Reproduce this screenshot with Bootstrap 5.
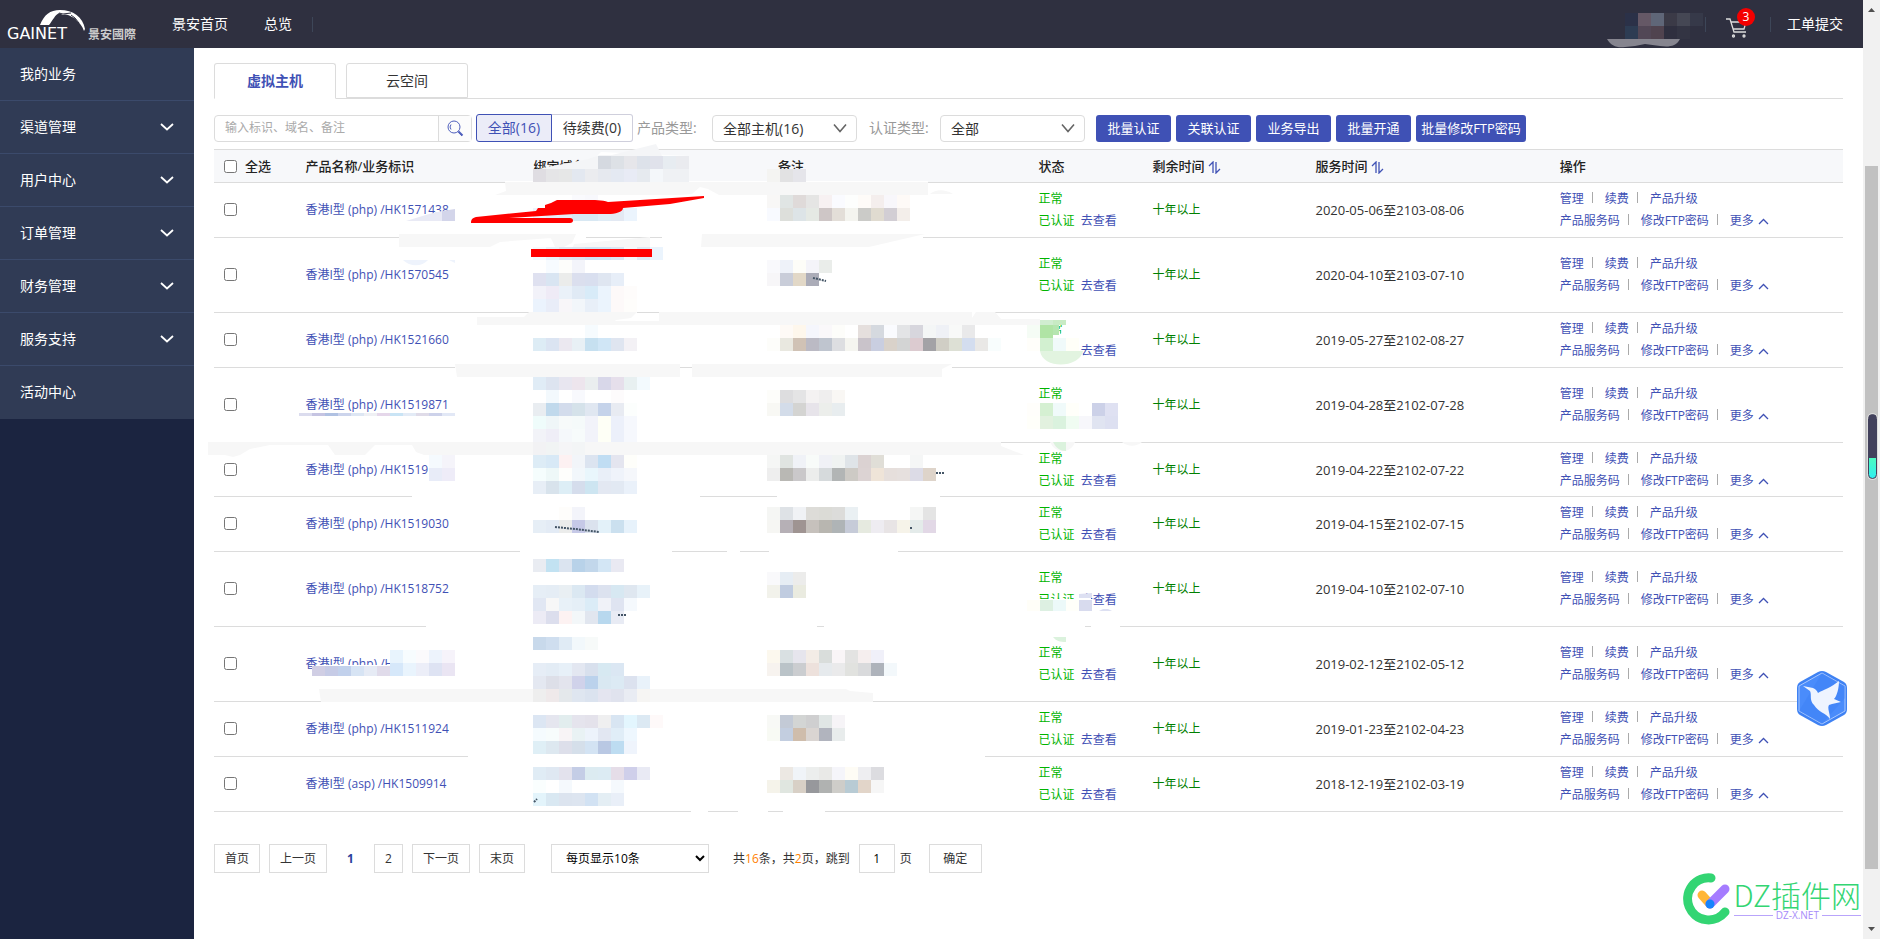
<!DOCTYPE html>
<html lang="zh-CN">
<head>
<meta charset="utf-8">
<meta name="viewport" content="width=device-width, initial-scale=1">
<title>虚拟主机</title>
<link rel="stylesheet" href="https://cdn.jsdelivr.net/npm/bootstrap@5.3.0/dist/css/bootstrap.min.css">
<style>
:root { --brand: #3f51b5; --line: #dcdcdc; }
body { font: 12px/22px "Open Sans", "Noto Sans CJK SC", sans-serif; color: #333; background: #fff; }
a { color: var(--brand); text-decoration: none; }
button, input, select { font-family: inherit; }
.topbar { height: 48px; background: #2f3040; font-size: 14px; }
.topbar a { color: #fff; }
.logo { width: 172px; height: 48px; }
.vsep { width: 1px; height: 15px; background: #3d4658; }
.cart { width: 28px; height: 30px; }
.cart-count { top: -1px; right: -1px; width: 18px; height: 18px; border-radius: 50%; background: #f40000; color: #fff; font-size: 12px; line-height: 18px; text-align: center; }
.side { width: 194px; background: #1b2440; }
.side a { height: 53px; padding: 0 20px; background: #303b55; border-bottom: 1px solid #3b4a6b; color: #fff; font-size: 14px; }
.side li:last-child a { border-color: #303b55; }
.pane { padding: 15px 20px 64px; }
.tabs { border-bottom: 1px solid var(--line); gap: 10px; }
.tabs .nav-link { width: 122px; height: 35px; margin-bottom: -1px; padding: 0; border: 1px solid var(--line); border-radius: 3px 3px 0 0; color: #333; font-size: 14px; }
.tabs .nav-link.active { height: 36px; border-bottom-color: #fff; color: var(--brand); font-weight: 700; background: #fff; }
.filters { margin: 15px 0 7px; font-size: 14px; }
.filters .find { width: 258px; height: 27px; margin-right: 4px; border: 1px solid var(--line); border-radius: 4px; }
.find input { border: 0; padding: 0 10px; font-size: 12px; min-width: 0; outline: 0; background: none; }
.find input::placeholder { color: #aaa; }
.find button { width: 33px; border: 0; border-left: 1px solid var(--line); background: #fcfcfc; padding: 0; }
.seg { height: 28px; padding: 0 10px; border: 1px solid #cfcfdc; background: #fff; color: #333; border-radius: 0 3px 3px 0; }
.seg.on { border-color: var(--brand); background: #ebecf8; color: var(--brand); border-radius: 3px 0 0 3px; }
.seg + .seg { border-left: 0; width: 81px; padding: 0; }
.seg.on { width: 76px; padding: 0; }
.filters label { color: #999; margin: 0 4px; width: 71px; white-space: nowrap; }
.filters .form-select { width: 145px; height: 27px; padding: 0 10px; border: 1px solid var(--line); border-radius: 4px; color: #333; font-size: 14px; line-height: 25px;
  background-image: url("data:image/svg+xml,%3Csvg xmlns='http://www.w3.org/2000/svg' viewBox='0 0 14 10'%3E%3Cpath d='M1 1.5l6 7 6-7' fill='none' stroke='%23666' stroke-width='1.6'/%3E%3C/svg%3E"); background-size: 14px 10px; background-position: right 9px center; }
.filters .batch { height: 27px; width: 75px; margin-left: 5px; padding: 0; border: 0; border-radius: 3px; background: var(--brand); color: #fff; font-size: 13px; line-height: 27px; white-space: nowrap; }
.filters .batch.first { margin-left: 11px; }
.filters .batch.wide { width: 110px; }
.hosts { width: 100%; table-layout: fixed; border-collapse: separate; border-spacing: 0; }
.hosts th { height: 34px; padding: 0 10px; background: #f7f8fa; border-top: 1px solid var(--line); border-bottom: 1px solid var(--line); font-size: 13px; font-weight: 500; color: #222; white-space: nowrap; }
.hosts td { height: 55px; padding: 0 10px; border-bottom: 1px solid var(--line); vertical-align: middle; white-space: nowrap; }
.hosts .tall td { height: 75px; }
.hosts .short td { height: 54px; }
.hosts input { width: 13px; height: 13px; margin: 0; vertical-align: -2px; }
.ok { color: #00b400; }
.years { color: #008000; }
.dates { font-size: 13px; }
.ops a + a { margin-left: 8px; }
.ops a + a::before { content: ""; display: inline-block; width: 1px; height: 11px; margin-right: 12px; background: #aaa; }
.pager { margin-top: 32px; }
.pager .pg { min-width: 29px; height: 29px; margin-right: 9px; padding: 0 10px; border: 1px solid var(--line); background: #fff; color: #333; text-align: center; line-height: 27px; }
.pager .here { border-color: transparent; color: #2a3f9d; font-weight: 700; }
.pager select { width: 158px; height: 29px; margin: 0 24px 0 17px; padding: 0 10px; border: 1px solid var(--line); background: #fff; color: #000; }
.pager input { width: 36px; height: 29px; margin: 0 5px 0 9px; border: 1px solid var(--line); text-align: center; }
.pager .go { width: 53px; margin-left: 17px; }
.pager b { color: #ff7f00; font-weight: 400; }
.scrollrail { width: 17px; background: #f1f1f1; padding: 7px 2px; }
.thumb { flex: 703 0 0; background: #c1c1c1; }
.marks { top: 0; left: 0; pointer-events: none; }
.pill { top: 414px; right: 3px; width: 9px; height: 65px; border-radius: 5px; border: 1px solid #42415c; background: linear-gradient(#42415c 68%, #4dfac0 68%, #2ff0f0); box-shadow: 0 0 0 1px #ddd; }
.bird { top: 670px; right: 32px; }
.brandmark { right: 19px; bottom: 14px; color: #33d573; }
.brandmark .big { font: 300 30px/32px "Noto Sans CJK SC", sans-serif; }
.brandmark .sub { font: 10px/10px "Open Sans", "Noto Sans CJK SC", sans-serif; color: #a78bfa; gap: 3px; }
.brandmark .sub::before, .brandmark .sub::after { content: ""; flex: 1; height: 1px; background: #b9a4fb; }
</style>
</head>
<body class="d-flex min-vh-100 position-relative">
<div class="d-flex flex-column flex-grow-1">
  <header class="topbar d-flex align-items-center">
    <a href="#" class="logo" aria-label="GAINET">
      <svg width="172" height="48" viewBox="0 0 172 48" fill="#fff">
        <path d="M40 25C44 15 50 10 60 10C73 10 83 17 85 29L84 31C82 26 80 23 77 21C76 19 75 18 72 17C69 15 66 14 63 15C62 14 60 14 59 13C55 15 53 20 49 25Z"/>
        <path d="M59 13l4 1 8-1M71 15l4 3 4 5" fill="none" stroke="#2f3040"/>
        <text x="7" y="39" font-family="DejaVu Sans" font-size="16">GAINET</text>
        <text x="88" y="39" font-family="Noto Sans CJK SC" font-size="12" font-weight="700" fill="#ccc">景安國際</text>
      </svg>
    </a>
    <nav class="d-flex align-items-center flex-grow-1"><a href="#" class="me-4 pe-2">景安首页</a><a href="#" class="ms-1 me-3">总览</a><span class="vsep ms-1"></span></nav>
    <span class="vsep me-3"></span>
    <a href="#" class="cart position-relative me-2 ms-1" aria-label="购物车">
      <svg width="22" height="22" viewBox="0 0 22 22" class="position-absolute bottom-0 start-0" fill="none" stroke="#ddd" stroke-width="1.3"><path d="M0 2h4l4 13h12M5 5h15l-2 7H7"/><circle cx="7.500" cy="19" r="1"/><circle cx="18" cy="19" r="1"/></svg>
      <span class="cart-count position-absolute">3</span>
    </a>
    <span class="vsep ms-2 me-3"></span>
    <a href="#" class="me-3 pe-1">工单提交</a>
  </header>
  <div class="d-flex flex-grow-1">
    <aside class="side flex-shrink-0"><ul class="list-unstyled m-0" id="menu"></ul></aside>
    <main class="pane flex-grow-1">
      <nav class="tabs nav">
        <a href="#" class="nav-link active d-flex align-items-center justify-content-center">虚拟主机</a>
        <a href="#" class="nav-link d-flex align-items-center justify-content-center">云空间</a>
      </nav>
      <div class="filters d-flex align-items-center">
        <div class="find d-flex">
          <input type="text" class="flex-grow-1" placeholder="输入标识、域名、备注" aria-label="搜索">
          <button type="button" aria-label="搜索"><svg width="18" height="18" viewBox="0 0 18 18" fill="none" stroke="#5060bd"><circle cx="8" cy="7" r="6"/><path d="M5 4.500a4 4 0 0 0 0 5M12 11.500l4 4.500" /><path d="M12.500 11.500l4 4" stroke-width="2"/></svg></button>
        </div>
        <button type="button" class="seg on">全部(16)</button><button type="button" class="seg">待续费(0)</button>
        <label for="kind">产品类型:</label>
        <select id="kind" class="form-select"><option>全部主机(16)</option></select>
        <label for="auth" class="ms-2 ps-1">认证类型:</label>
        <select id="auth" class="form-select"><option>全部</option></select>
        <button type="button" class="batch first">批量认证</button><button type="button" class="batch">关联认证</button><button type="button" class="batch">业务导出</button><button type="button" class="batch">批量开通</button><button type="button" class="batch wide">批量修改FTP密码</button>
      </div>
      <table class="hosts">
        <colgroup><col style="width:5%"><col style="width:14%"><col style="width:15%"><col style="width:16%"><col style="width:7%"><col style="width:10%"><col style="width:15%"><col style="width:18%"></colgroup>
        <thead><tr>
          <th><label class="d-flex align-items-center"><input type="checkbox" class="me-2 flex-shrink-0">全选</label></th>
          <th>产品名称/业务标识</th><th>绑定域名（只</th><th>备注</th><th>状态</th>
          <th>剩余时间 <svg width="13" height="13" viewBox="0 0 13 13" fill="none" stroke="#3f51b5" stroke-width="1.300"><path d="M1 5l4-4v11M8 1v11l4-4"/></svg></th>
          <th>服务时间 <svg width="13" height="13" viewBox="0 0 13 13" fill="none" stroke="#3f51b5" stroke-width="1.300"><path d="M1 5l4-4v11M8 1v11l4-4"/></svg></th>
          <th>操作</th>
        </tr></thead>
        <tbody id="rows"></tbody>
      </table>
      <div class="pager d-flex align-items-center">
        <a class="pg" href="#">首页</a><a class="pg" href="#">上一页</a><a class="pg here" href="#">1</a><a class="pg" href="#">2</a><a class="pg" href="#">下一页</a><a class="pg" href="#">末页</a>
        <select aria-label="每页条数"><option>每页显示10条</option></select>
        <label for="jump">共<b>16</b>条，共<b>2</b>页，跳到</label><input id="jump" type="text" value="1"><span>页</span>
        <button type="button" class="pg go">确定</button>
      </div>
    </main>
  </div>
</div>
<div class="scrollrail d-flex flex-column flex-shrink-0 align-items-stretch">
  <svg width="13" height="6" viewBox="0 0 13 6"><path d="M3 5l3.500-4L10 5z" fill="#505050"/></svg>
  <div style="flex:153 0 0"></div><div class="thumb"></div><div style="flex:57 0 0"></div>
  <svg width="13" height="6" viewBox="0 0 13 6"><path d="M3 1l3.500 4L10 1z" fill="#505050"/></svg>
</div>
<div class="pill position-absolute"></div>

<svg class="marks position-absolute" width="1863" height="939" viewBox="0 0 1863 939" aria-hidden="true">
  <!-- gaps rubbed out of the row rules and text -->
  <g id="gaps" fill="#fff"></g>
  <g fill="#fff">
    <path d="M429 455h27v28h-27zM390 650h65v28h-65zM319 665h72v12h-72zM1027 320h30l3 13 2 10h15l6 12-6 11h-50zM1027 402h91v27h-91zM1036 599h56v13h-56zM1091 598v13h-12v-17h12zM533 172l60-12 8-8 88 4v26H533z"/>
  </g>
  <g fill="#f4f5f7"><path d="M600 158l56-14 6 12zM533 170l55-11 12-4 89 1v26H533z"/></g>
  <g fill="#f7f7f7">
    <path d="M505 182H928V195H719L708 189 700 187 692 194 680 195H495L506 191zM930 194c6-5 15-5 23 0z"/>
    <path d="M399 234H551V238L500 242 490 247H399zM549 234H576L572 243 564 247H555zM574 244L650 237V247H573zM702 234H925L899 240 869 247H701z"/>
    <path d="M529 312H637L631 318 616 320 615 321H659V312H972V318L976 312H995L1001 319H1040V325H477V317H524z"/>
    <path d="M455 364H680V377H457zM692 364H952L942 369V377H692z"/>
    <path d="M208 442H682V443L639 446 637 449V442H1001V446L1024 455H424L416 452 412 445H375L365 455H335L328 445H270L250 449 240 455 233 457 225 455H208z"/>
    <path d="M319 689H846L850 691 873 693V702H321zM1050 442h25c-4 12-20 12-25 0zM1122 442h20c-6 5-14 5-20 0z"/>
  </g>
  <g id="cells" shape-rendering="crispEdges"></g>
  <path d="M533 170V169L575 163 603 155H598L689 152V156H598V160L580 169z" fill="#f7f8fa" opacity="0"/>
  <path d="M406 221L429 214 442 211V221z" fill="#e9eaf5"/><path d="M442 211L455 209V221H442z" fill="#d3d5ea"/>
  <path d="M403 260h25c-6 7-18 7-25 0zM449 260h6v3z" fill="#eef3fc"/>
  <path d="M1040 351h43c-3 17-40 19-43 0z" fill="#e2f4e0"/>
  <path d="M1053 442h13v9c-6 0-10-3-13-9zM1053 637h13v5c-6 0-10-1-13-5z" fill="#dbf2dd"/>
  <path d="M1079 594l13-1v5h-13zM1099 611l4-2h5l4 2z" fill="#dde0f2"/>
  <path d="M1607 39H1680C1676 47 1668 47 1660 46L1645 44 1635 46 1625 47C1617 48 1611 46 1607 39z" fill="#86858f"/>
  <path d="M471 223C471 220 472 218 476 217L536 211 538 208H545V205L551 203 557 200H585C595 200 602 200 608 202L704 196V198L670 204 623 208C623 212 615 214 608 214H574L509 218H570C574 218 574 223 570 223zM531 249H652V257H531z" fill="#f00"/>
  <path d="M817 143" />
  <path d="M936 473h9M555 527l20 2 24 3M910 528h2M618 615h8M534 802l3-3M813 278l5 1 8 2" stroke="#456" stroke-width="2" stroke-dasharray="2 1" fill="none"/>
</svg>

<svg class="bird position-absolute" width="52" height="57" viewBox="0 0 52 57" aria-hidden="true">
  <path d="M26 1Q28 1 30 2L48 12Q51 14 51 18V39Q51 43 48 45L30 55Q26 57 22 55L4 45Q1 43 1 39V18Q1 14 4 12L22 2Q24 1 26 1z" fill="#3f82f3"/>
  <path d="M26 3L49 16V41L26 54 3 41V16z" fill="#4a8cfb" stroke="#a9c8ff" stroke-linejoin="round"/>
  <path d="M26 3L49 16V28L26 54 3 41z" fill="#2f75ee" opacity=".25"/>
  <path d="M7 16L17 18C20 19 21 21 22 23C27 20 36 17 43 11C43 18 41 26 38 29L45 32 36 34 33 35C31 38 34 43 34 49C30 43 22 42 18 35C13 30 16 25 14 21z" fill="#eef4ff"/>
</svg>
<div class="brandmark position-absolute d-flex align-items-center">
  <svg width="51" height="52" viewBox="0 0 51 52" fill="none" stroke-width="9" stroke-linecap="round"><path d="M28 5A21 21 0 1 0 42 39" stroke="#33d573"/><path d="M19 22l8 9" stroke="#ffb638"/><path d="M27 31l15-15" stroke="#a57cff"/><circle cx="27" cy="31" r="4.500" fill="#1684fc" stroke="none"/></svg>
  <div><div class="big">DZ插件网</div><div class="sub d-flex align-items-center">DZ-X.NET</div></div>
</div>

<script>
const chevron = '<svg width="14" height="8" viewBox="0 0 14 8" fill="none" stroke="#fff" stroke-width="1.8"><path d="M1 1l6 5.500L13 1"/></svg>';
document.getElementById('menu').innerHTML = ['我的业务', '渠道管理', '用户中心', '订单管理', '财务管理', '服务支持', '活动中心'].map((t, i) =>
  `<li><a href="#" class="d-flex align-items-center justify-content-between">${t}${i && i < 6 ? chevron : ''}</a></li>`).join('');

const hosts = [
  ['', '(php) /HK1571438', '2020-05-06至2103-08-06'], ['tall', '(php) /HK1570545', '2020-04-10至2103-07-10'],
  ['', '(php) /HK1521660', '2019-05-27至2102-08-27'], ['tall', '(php) /HK1519871', '2019-04-28至2102-07-28'],
  ['short', '(php) /HK1519', '2019-04-22至2102-07-22'], ['', '(php) /HK1519030', '2019-04-15至2102-07-15'],
  ['tall', '(php) /HK1518752', '2019-04-10至2102-07-10'], ['tall', '(php) /HK', '2019-02-12至2102-05-12'],
  ['', '(php) /HK1511924', '2019-01-23至2102-04-23'], ['', '(asp) /HK1509914', '2018-12-19至2102-03-19']];
const up = '<svg class="ms-1" width="11" height="7" viewBox="0 0 11 7" fill="none" stroke="#3f51b5" stroke-width="1.300"><path d="M1 6l4.500-4.500L10 6"/></svg>';
document.getElementById('rows').innerHTML = hosts.map(([size, id, dates]) => `<tr class="${size}">
  <td><input type="checkbox" aria-label="${id}"></td><td><a href="#">香港I型 ${id}</a></td><td></td><td></td>
  <td><span class="ok">正常</span><br><span class="ok">已认证</span>&nbsp; <a href="#">去查看</a></td>
  <td class="years">十年以上</td><td class="dates">${dates}</td>
  <td class="ops"><a href="#">管理</a><a href="#">续费</a><a href="#">产品升级</a><br><a href="#">产品服务码</a><a href="#">修改FTP密码</a><a href="#">更多${up}</a></td></tr>`).join('');

// [y, x1, x2]: stretches where a row rule is rubbed out
const gaps = [[182,505,928],[237,399,586],[237,662,923],[312,529,637],[312,659,995],[367,455,680],[367,692,952],[442,208,637],[442,682,1001],
  [496,412,700],[496,777,940],[551,520,672],[551,727,740],[551,769,898],[626,426,817],[626,824,1085],[626,1091,1120],[701,321,353],[701,368,873],
  [756,468,985],[811,691,708],[811,738,768],[811,783,825]];
document.getElementById('gaps').innerHTML = gaps.map(([y, a, b]) => `<rect x="${a}" y="${y - 1}" width="${b - a}" height="3"/>`).join('');

// mosaic strips: x, y, then one colour per 13px cell ("-" leaves a cell clear)
const strips = `598 156 d5d9e0 dde1e6 e6e6ea dde2ea e0e2eb e7ecf1 eaebef
533 169 dfdde2 e5e5e7 e6e7e7 e3e8f0 ebecef e6e9ef e4e9f2 e8ebf5 e6eaef f4f7fa eff1f4 eff1f4
572 195 fafafd f8f8fc
533 208 eef4fb e6f0fa e4eef7 d8e8f3 d8e8f3 e0ecf6 e3e9f3 ebf4fd
533 247 f5f9fd e8f1f9 e0e6f0 dde4f0 d0e3f3 d0e5f5 dce6f2 f5f7fa e0e9f3 ebf4fd
546 260 f7fbff fdfdfb f3f4fa
533 273 dfe1f0 d9e5f2 ebeceb dbdfee d9dfef dfe6f1 e7eef8
533 286 f2f2f9 efebf6 eaf1f9 e0eaf5 d8ebf8 ebf4fd fdf9f9 fefcfb
533 299 ebf3fd e9edf8 f8f6f9 f2f6fa e8eff8 ebf4fd fdf9f9 fefdfb
585 325 f6fbfe
533 338 ddecf5 dbe4f2 ebe8f0 e8f0f5 c6e0f0 d0e6f6 dfe5f0 f3f1f5
533 377 e0ecf6 dde4f0 e8e6f0 ede5ed eaeeef d8d7e9 e6dfeb e8f0f1 f3fafe
546 390 f3f9fd - f8f9fd - - fdfbfc
533 403 e9edf1 c0d9ec d3dcec d5e2ea e0e7f1 c5d3ea e8ebf2 fcfefd
533 416 effcfb eff6f8 f7fafa f5fafa f2f3fa fefff6 ecf0fa f6f8fd
533 429 f2f3f8 efeef7 f5f8fb f7fbfb f2f3fa fefff6 ecf0fa f6f8fd
533 442 f2f2f4 f1f4f4 f5f5f7 f3f5f6
533 455 ddecf6 d8e9f6 fdf1f2 f2f5f9 dce4f0 c0ddf3 e4e5ef fefefa
533 468 f5fdfd eef8f8 fefefc f2f7fb e9f6fc e9eff8 eff3fa f5f7fb
533 481 e7eef6 d8e3ec ddeef6 d5ddec cde5f1 e3e8f2 e2e9f3 eaf1fa
559 507 fefdfb f3f4fa
533 520 e6eef6 e3ebf5 ebeceb c6c9e7 dbe2ee e3f1f9 cbe0ef e7f2fb
533 559 e9ecf2 c2e2f2 dbe4f0 b8d2e9 c2d7eb d3e6f5 e9e9f2
533 585 e6eef6 e5edf5 e9eff3 dbe8f2 d3dcee dce2ef d7e8f2 dfe7f0 e8f2f9
533 598 e1e7f3 f7f7f7 e8f1f8 e5eff7 dbecf7 f0f2f8 dfe4f1 f5f9fd
533 611 ecebf5 dcdeed fdf2f2 f3f7f9 e1e6ef b8d8ee e8ebf4
533 637 c8d9eb cfdeef e0ebf5 f2f8fb f7faf9
533 663 e6edf6 e3ecf5 e7f0f8 e3e7f1 d8e0ed d7e9f2 dbe7f3
533 676 e4e8f1 dddfe8 e3e4ed d0d2ea bbd2ec d9e8f2 dceaf4 dce2ef e9f2fa
533 689 eeeeee efe9ea e4e8eb dfe6f0 dbe3ef e4e5f0 e0e3ee e9ecf3 f6f5f3
533 715 dce6f3 e5e6ef e2edee e5e4ed e4e2eb efeff0 d8e5f2 e3f6fe dce9f3 fef9f9
533 728 f5fbfe f7fcfc f8f4f6 e9f2f4 edf3fb e2e7f2 e0edf7 eef7fe
533 741 dfeff6 dde8f0 dddfea d5dfea d3e3f3 b9c8e3 bddcf1 eff4fc
533 767 e0ecf5 dfe8f2 e3e2ed c4cde6 dcebf1 dcebf3 e5dde8 cfcfea e9eaf4
533 780 fafefe - f5f9fd - - - f5f9fd
533 793 e3f4fb d9e8f2 dce4ef dde5f0 d2e2f3 e4eef4 e9eff8
767 169 f4f4f2 e2e2e3 e5e5ea
767 195 f8f7f6 e0e5e4 dfdad9 e5e5e4 f7f1f2 fafbff fdfefd fefbf8 f4eeed f8f7fb fefaf7
767 208 f8faff dddfdb dde4e7 e5e9e4 cec6c6 e3ded8 f4f4ef cbcbc8 e0dbd0 d2ced4 f3eeea
767 260 f9f9fc eef2f9 fdfdf8 f4f4f9 eaedea
767 273 f7f6f8 c9cdd9 e2d8c7 abacb8
780 325 fefaf6 fef7ec f5f6fc faf8fa fdfdfa - e5dfdd d5d9df fafbfe e3e4e6 d7d6dd f4f6f6 eff1f6 f8f9f8 e9e9ea
767 338 fdfdfa e9e8e0 d0c2b5 bbbac4 bfc5cf dddee1 f5f5f0 c9c3ca c9cee0 d9d2ca d3d4d4 dccbd0 a3a2a6 d0cec5 dde0d5 d3ddef e9e8e6 f8fdfd
767 390 fdfdfa dddddf e4e4e5 f4f2f2 efeeee f9f7f4
767 403 f8f8f4 d3dce9 d4d4d2 e7e4ea eceeeb e8edef
767 455 f5f6f5 e0e4e1 f0f2f7 f8fbf9 f0f1f6 f0f3f2 dfe4e8 dbd2d2 e0ded7 - - f5f6f6
767 468 eeeeee b9b8b4 cac8ca ecedec d6dadc b2b5b5 cdcac5 dcd3d3 efe4d8 e6dfdc e6e0de dcdbe6 ded4ca
767 507 f5f6f4 dee2e6 f0f2f5 dddcd8 dbdbd6 dcdcda eaf0f3 - - - - f5f6f5 e4e4e4
767 520 f6f6f3 b6b0b6 9f9492 c6c1bc b8b6b0 afb4b6 c6cbd8 e6eae0 eeecf1 e8e4e5 f6f3e9 e4ebea e2d8e6
767 572 f9f9fb e6edf4 ececeb
767 585 f2f2eb c0cce0 eaebe0
767 650 fcf8ee d9e0e2 e6e5ed f3ece6 d9dddb f9f5f7 e3e3e2 f5eeee f0f0f9
767 663 f7f3ef bac3c8 cbcdd0 ede1dc e6eaed eaeaeb e1e2df d9dadc aeb3bb f3f8fb
767 715 f8f9f6 c3cad6 d3d5d4 cfcfd0 e0e6e5 f6f4f7
767 728 f8faf4 c3cee0 cfbdac dad5d2 b1b4be e8ecec
780 767 ece8e3 f0f4f8 eceeed e9e9e7 f5f5fa fefcf5 eeeef1 dcdce0
767 780 f5f3ea e0e6e0 d8d0c6 97989c b0b2b1 cecdc9 b8cbd4 e2d5c9 f6f6f6
429 455 f5fafe f5f4fa
429 468 e8ecf8 eeecf8
390 650 e8f4fd f7fcfe fbfafc edf3fc f6f3fa
390 663 d6e8fa e9f4fd eceef8 dee3f3 eae5f3
1027 325 f5fcf5 b0e4a5
1027 338 fffefa d2f0d0 f0fafa fffff8
1027 403 fffefb d5f0d2 f0fafa fffffa - ccd1e8 dfe1f2
1027 416 fffffa e2f1df daf2de f0fcf2 f7f7fb e0e4f1 dde0f1
1625 13 2b3148 655866 5f6678 3b3a47 454754 363949
1625 26 2d3c53 524756 50434f 2f2f3f 333443`;
// thinner strips give their own cell height after "h"
const thin = `299 413 h3 dbdcee c5c4e2 b0c1e2 ccd4ec dde6f3 eff0f4 e5d7ea c9e4f5 e3ebf6 dfdbe8 cdd2ea e2e8f6
312 666 h10 d0cee4 c6cbe6 c2d1ec d7e4f4 e6ebf5 e0dbea
1040 320 h5 d0edd0 c8ebc4
1053 325 h10 b5e5b0
1027 600 h11 fffef8 ddf0e2 ecf9f9 fffffa d8dbee
1079 597 h3 - `;
document.getElementById('cells').innerHTML = (strips + '\n' + thin).split('\n').map(line => {
  const [x, y, ...rest] = line.trim().split(' ');
  const h = rest[0][0] === 'h' ? +rest.shift().slice(1) : 13;
  return rest.map((c, i) => c === '-' ? '' : `<rect x="${+x + i * 13}" y="${y}" width="${y === '325' && h === 10 ? 6 : 13}" height="${h}" fill="#${c}"/>`).join('');
}).join('');
</script>
<script src="https://cdn.jsdelivr.net/npm/bootstrap@5.3.0/dist/js/bootstrap.bundle.min.js"></script>
</body>
</html>
